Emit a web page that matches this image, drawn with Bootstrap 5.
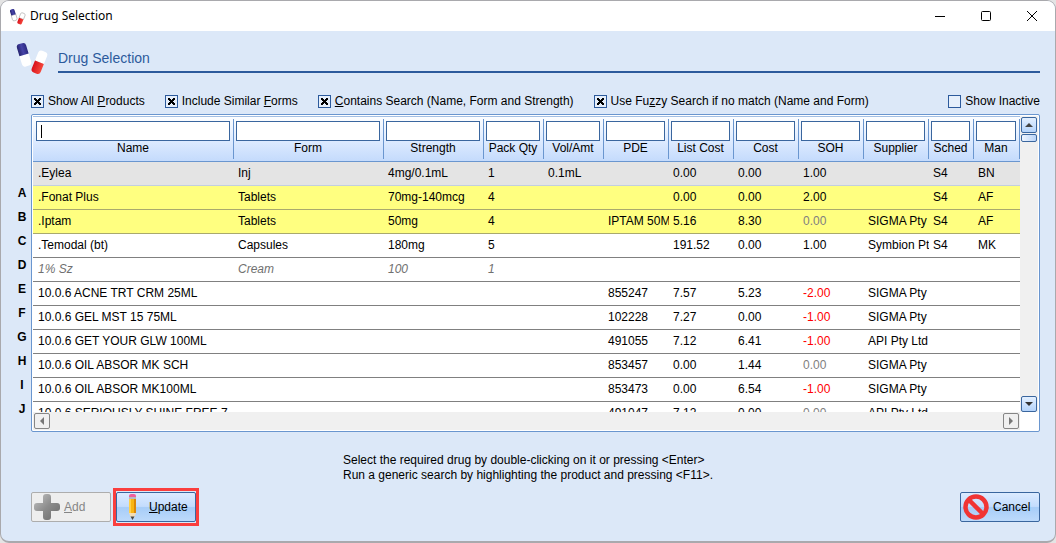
<!DOCTYPE html>
<html lang="en">
<head>
<meta charset="utf-8">
<meta name="viewport" content="width=device-width, initial-scale=1">
<title>Drug Selection</title>
<link href="https://cdn.jsdelivr.net/npm/bootstrap@5.3.0/dist/css/bootstrap.min.css" rel="stylesheet">
<style>
  :root { --ink: #000; --navy: #2c5a9c; --edge: #6a96cf; --field: #3a669e; --pane: #dce8f8; }
  body { background: #e4e4e4; font-family: "Liberation Sans", Arial, sans-serif; font-size: 12px; line-height: 16px; color: var(--ink); }
  .app-window { height: 100vh; min-height: 360px; border: 1px solid #a9a9ad; border-bottom-width: 2px; border-radius: 9px; background: var(--pane); overflow: hidden; }
  .title-bar { height: 30px; background: #fff; font-family: "Noto Sans", "Open Sans", sans-serif; padding-left: 8px; }
  .win-btn { width: 46px; height: 30px; border: 0; background: none; padding: 0; display: grid; place-items: center; }
  .heading-row { padding: 10px 15px 0 14px; }
  .heading-row h1 { font-size: 14px; line-height: 18px; color: var(--navy); padding: 8px 0 4px; margin: 0 0 0 9px; border-bottom: 2px solid var(--navy); }
  .filters { padding: 18px 15px 5px 30px; }
  .tick { display: flex; align-items: center; gap: 4px; }
  .tick input { appearance: none; width: 13px; height: 13px; margin: 0; border: 1px solid var(--navy); background: #e6effb; display: grid; place-items: center; }
  .tick input:checked::after { content: ""; width: 7px; height: 7px; background:
    linear-gradient(45deg, transparent 38%, #000 38% 62%, transparent 62%),
    linear-gradient(-45deg, transparent 38%, #000 38% 62%, transparent 62%); }
  .list-area { min-height: 0; padding-right: 15px; }
  .row-keys { width: 30px; padding: 67px 0 0; font-weight: 700; line-height: 24px; list-style: none; }
  .row-keys li { width: 18px; margin-left: auto; text-align: center; }
  .grid-box { border: 1px solid var(--edge); border-radius: 2px; background: #fff; padding: 1px; min-width: 0; }
  .grid-view { min-width: 0; border-top: 1px solid #a3bfe4; }
  .drug-table { table-layout: fixed; width: 100%; border-collapse: separate; border-spacing: 0; white-space: nowrap; }
  .drug-table thead tr { background: linear-gradient(#fdfeff, #dceaff 55%, #c3dafc); }
  .drug-table th { height: 45px; padding: 4px 4px 4px 2px; font-weight: 400; text-align: center; vertical-align: top; border-bottom: 1px solid var(--edge);
    background: linear-gradient(var(--edge), var(--edge)) right top 2px / 1px 40px no-repeat; }
  .drug-table th:first-child { padding-left: 3px; }
  .drug-table th input { display: block; width: 100%; height: 20px; border: 1px solid var(--field); border-radius: 0; background: #fff; padding: 0 4px; outline: 0; }
  .drug-table th input[autofocus] { caret-color: transparent; }
  .drug-table th input[autofocus]:placeholder-shown { background: linear-gradient(#000, #000) 4px 3px / 1px 13px no-repeat #fff; }
  .drug-table th label { display: block; line-height: 14px; }
  .drug-table td { height: 24px; padding: 0 0 0 4px; line-height: 23px; overflow: hidden; border-bottom: 1px solid #808080; }
  .drug-table td:first-child { padding-left: 5px; }
  .drug-table .current td { background: #e4e4e4; border-bottom-color: #c3cfdf; }
  .drug-table .flagged td { background: #ffff80; border-bottom-color: #a9a96d; }
  .generic td { color: #707070; font-style: italic; }
  .neg { color: #f00; }
  .nil { color: #808080; }
  .track-v { width: 18px; background: #f0f0f0; padding: 1px 1px 0; }
  .track-h { height: 18px; background: #f0f0f0; padding: 1px; margin-right: 18px; }
  .sb { width: 16px; height: 16px; padding: 0; border: 1px solid var(--field); border-radius: 2px; background: linear-gradient(#e4f0ff, #b4d3fa); display: grid; place-items: center; }
  .sb.off { border-color: #868686; background: #f0f0f0; }
  .thumb { height: 8px; margin-top: 1px; border: 1px solid var(--field); border-radius: 2px; background: linear-gradient(90deg, #f0f6ff, #b9d4f8); }
  .hint { padding: 21px 0 5px; line-height: 15px; }
  .actions { padding: 0 15px 15px 30px; }
  .cmd { height: 30px; width: 80px; border: 1px solid var(--field); border-radius: 2px; padding: 0 2px; color: #000; display: flex; align-items: center;
    background: linear-gradient(#dcebff, #c3dcfd 48%, #a7cdf8 52%, #bddafb); }
  .cmd:disabled { border-color: #adadad; background: #eee; color: #858585; }
  .callout { border: 3px solid #fa3e3e; padding: 1px 0; margin: 0 0 0 2px; }
</style>
</head>
<body>
<svg class="position-absolute" width="0" height="0" aria-hidden="true">
  <defs>
    <linearGradient id="blueCap"><stop offset="0" stop-color="#26246f"/><stop offset=".5" stop-color="#4744a8"/><stop offset="1" stop-color="#2c2a80"/></linearGradient>
    <linearGradient id="redCap"><stop offset="0" stop-color="#d8101c"/><stop offset="1" stop-color="#f5483c"/></linearGradient>
  </defs>
  <symbol id="capsules" viewBox="0 0 32 32">
    <g transform="rotate(-17 8.500 13)"><path d="M4 13h9v8q0 3-3 3H7q-3 0-3-3z" fill="#fff"/><path d="M4 13V5q0-3 3-3h3q3 0 3 3v8z" fill="url(#blueCap)" stroke="none"/></g>
    <g transform="rotate(22 23 20)"><path d="M18.500 20v-8q0-3 3-3h3q3 0 3 3v8z" fill="#fff"/><path d="M18.500 20h9v8q0 3-3 3h-3q-3 0-3-3z" fill="url(#redCap)" stroke="none"/></g>
  </symbol>
</svg>

<main class="app-window d-flex flex-column">
  <header class="title-bar d-flex align-items-center flex-shrink-0">
    <svg width="17" height="17" viewBox="0 0 32 32" aria-hidden="true"><g stroke="#999" stroke-width="1"><use href="#capsules"/></g></svg>
    <span class="ms-1">Drug Selection</span>
    <div class="d-flex ms-auto">
      <button class="win-btn" aria-label="Minimize"><svg width="10" height="10"><path d="M0 5.500h10" stroke="#000"/></svg></button>
      <button class="win-btn" aria-label="Maximize"><svg width="10" height="10"><rect x=".5" y=".5" width="9" height="9" rx="1" fill="none" stroke="#000"/></svg></button>
      <button class="win-btn" aria-label="Close"><svg width="10" height="10"><path d="M0 0l10 10M10 0L0 10" stroke="#000"/></svg></button>
    </div>
  </header>

  <div class="heading-row d-flex flex-shrink-0">
    <svg width="34" height="34" viewBox="0 0 32 32" aria-hidden="true"><use href="#capsules"/></svg>
    <h1 class="flex-grow-1 align-self-start fw-normal">Drug Selection</h1>
  </div>

  <div class="filters d-flex flex-shrink-0">
    <div class="d-flex" style="gap:20px">
      <label class="tick"><input type="checkbox" checked><span>Show All <u>P</u>roducts</span></label>
      <label class="tick"><input type="checkbox" checked><span>Include Similar <u>F</u>orms</span></label>
      <label class="tick"><input type="checkbox" checked><span><u>C</u>ontains Search (Name, Form and Strength)</span></label>
      <label class="tick"><input type="checkbox" checked><span>Use Fu<u>z</u>zy Search if no match (Name and Form)</span></label>
    </div>
    <label class="tick ms-auto"><input type="checkbox"><span>Show Inactive</span></label>
  </div>

  <section class="list-area d-flex flex-grow-1">
    <ul class="row-keys m-0 flex-shrink-0 overflow-hidden">
      <li>A</li><li>B</li><li>C</li><li>D</li><li>E</li><li>F</li><li>G</li><li>H</li><li>I</li><li>J</li>
    </ul>
    <div class="grid-box flex-grow-1 d-flex flex-column">
      <div class="d-flex flex-grow-1 overflow-hidden">
        <div class="grid-view flex-grow-1 overflow-hidden">
          <table class="drug-table">
            <colgroup>
              <col width="201"><col width="150"><col width="100"><col width="60"><col width="60"><col width="65"><col width="65"><col width="65"><col width="65"><col width="65"><col width="45"><col>
            </colgroup>
            <thead>
              <tr>
                <th><input id="f1" placeholder=" " autofocus><label for="f1">Name</label></th>
                <th><input id="f2"><label for="f2">Form</label></th>
                <th><input id="f3"><label for="f3">Strength</label></th>
                <th><input id="f4"><label for="f4">Pack Qty</label></th>
                <th><input id="f5"><label for="f5">Vol/Amt</label></th>
                <th><input id="f6"><label for="f6">PDE</label></th>
                <th><input id="f7"><label for="f7">List Cost</label></th>
                <th><input id="f8"><label for="f8">Cost</label></th>
                <th><input id="f9"><label for="f9">SOH</label></th>
                <th><input id="f10"><label for="f10">Supplier</label></th>
                <th><input id="f11"><label for="f11">Sched</label></th>
                <th><input id="f12"><label for="f12">Man</label></th>
              </tr>
            </thead>
            <tbody>
              <tr class="current"><td>.Eylea</td><td>Inj</td><td>4mg/0.1mL</td><td>1</td><td>0.1mL</td><td></td><td>0.00</td><td>0.00</td><td>1.00</td><td></td><td>S4</td><td>BN</td></tr>
              <tr class="flagged"><td>.Fonat Plus</td><td>Tablets</td><td>70mg-140mcg</td><td>4</td><td></td><td></td><td>0.00</td><td>0.00</td><td>2.00</td><td></td><td>S4</td><td>AF</td></tr>
              <tr class="flagged"><td>.Iptam</td><td>Tablets</td><td>50mg</td><td>4</td><td></td><td>IPTAM 50M</td><td>5.16</td><td>8.30</td><td class="nil">0.00</td><td>SIGMA Pty</td><td>S4</td><td>AF</td></tr>
              <tr><td>.Temodal (bt)</td><td>Capsules</td><td>180mg</td><td>5</td><td></td><td></td><td>191.52</td><td>0.00</td><td>1.00</td><td>Symbion Pty</td><td>S4</td><td>MK</td></tr>
              <tr class="generic"><td>1% Sz</td><td>Cream</td><td>100</td><td>1</td><td></td><td></td><td></td><td></td><td></td><td></td><td></td><td></td></tr>
              <tr><td>10.0.6 ACNE TRT CRM 25ML</td><td></td><td></td><td></td><td></td><td>855247</td><td>7.57</td><td>5.23</td><td class="neg">-2.00</td><td>SIGMA Pty</td><td></td><td></td></tr>
              <tr><td>10.0.6 GEL MST 15 75ML</td><td></td><td></td><td></td><td></td><td>102228</td><td>7.27</td><td>0.00</td><td class="neg">-1.00</td><td>SIGMA Pty</td><td></td><td></td></tr>
              <tr><td>10.0.6 GET YOUR GLW 100ML</td><td></td><td></td><td></td><td></td><td>491055</td><td>7.12</td><td>6.41</td><td class="neg">-1.00</td><td>API Pty Ltd</td><td></td><td></td></tr>
              <tr><td>10.0.6 OIL ABSOR MK SCH</td><td></td><td></td><td></td><td></td><td>853457</td><td>0.00</td><td>1.44</td><td class="nil">0.00</td><td>SIGMA Pty</td><td></td><td></td></tr>
              <tr><td>10.0.6 OIL ABSOR MK100ML</td><td></td><td></td><td></td><td></td><td>853473</td><td>0.00</td><td>6.54</td><td class="neg">-1.00</td><td>SIGMA Pty</td><td></td><td></td></tr>
              <tr><td>10.0.6 SERIOUSLY SHINE FREE 7</td><td></td><td></td><td></td><td></td><td>491047</td><td>7.12</td><td>0.00</td><td class="nil">0.00</td><td>API Pty Ltd</td><td></td><td></td></tr>
            </tbody>
          </table>
        </div>
        <div class="track-v d-flex flex-column flex-shrink-0">
          <button class="sb" aria-label="Scroll up"><svg width="8" height="4"><path d="M0 4l4-4 4 4z" fill="#444"/></svg></button>
          <div class="thumb"></div>
          <button class="sb mt-auto" aria-label="Scroll down"><svg width="8" height="4"><path d="M0 0l4 4 4-4z" fill="#333"/></svg></button>
        </div>
      </div>
      <div class="track-h d-flex justify-content-between flex-shrink-0">
        <button class="sb off" aria-label="Scroll left"><svg width="4" height="8"><path d="M4 0L0 4l4 4z" fill="#777"/></svg></button>
        <button class="sb off" aria-label="Scroll right"><svg width="4" height="8"><path d="M0 0l4 4-4 4z" fill="#777"/></svg></button>
      </div>
    </div>
  </section>

  <div class="hint d-flex justify-content-center flex-shrink-0">
    <p class="m-0">Select the required drug by double-clicking on it or pressing &lt;Enter&gt;<br>Run a generic search by highlighting the product and pressing &lt;F11&gt;.</p>
  </div>

  <footer class="actions d-flex align-items-center flex-shrink-0">
    <button class="cmd" disabled>
      <svg width="26" height="26" viewBox="0 0 26 26" aria-hidden="true"><defs><linearGradient id="plusFill" x2="1" y2="1"><stop offset="0" stop-color="#c4c4c4"/><stop offset=".5" stop-color="#8c8c8c"/><stop offset="1" stop-color="#6a6a6a"/></linearGradient></defs><path d="M9 3q0-3 3-3h2q3 0 3 3v6h6q3 0 3 3v2q0 3-3 3h-6v6q0 3-3 3h-2q-3 0-3-3v-6H3q-3 0-3-3v-2q0-3 3-3h6z" fill="url(#plusFill)"/></svg>
      <span class="ms-1"><u>A</u>dd</span>
    </button>
    <div class="callout">
      <button class="cmd">
        <svg width="26" height="26" viewBox="0 0 26 26" aria-hidden="true"><path d="M10 3V2q0-2 2-2h3q2 0 2 2v1z" fill="#f0609c"/><path d="M10 3h7v2h-7z" fill="#b9b9c4"/><path d="M10 5h7v14h-7z" fill="#f9b514"/><path d="M10 5h2v14h-2z" fill="#ffd04d"/><path d="M15 5h2v14h-2z" fill="#d9870b"/><path d="M10 19h7l-2 5h-3z" fill="#f3dcb4"/><path d="M11.500 22.500h4l-2 3.500z" fill="#444"/></svg>
        <span class="ms-1"><u>U</u>pdate</span>
      </button>
    </div>
    <button class="cmd ms-auto">
      <svg width="26" height="26" viewBox="0 0 26 26" aria-hidden="true"><circle cx="13" cy="13" r="10.500" fill="none" stroke="#f03434" stroke-width="4.500"/><path d="M6 6l14 14" stroke="#f03434" stroke-width="4.500"/></svg>
      <span class="ms-1">Cancel</span>
    </button>
  </footer>
</main>
<script src="https://cdn.jsdelivr.net/npm/bootstrap@5.3.0/dist/js/bootstrap.bundle.min.js"></script>
</body>
</html>
